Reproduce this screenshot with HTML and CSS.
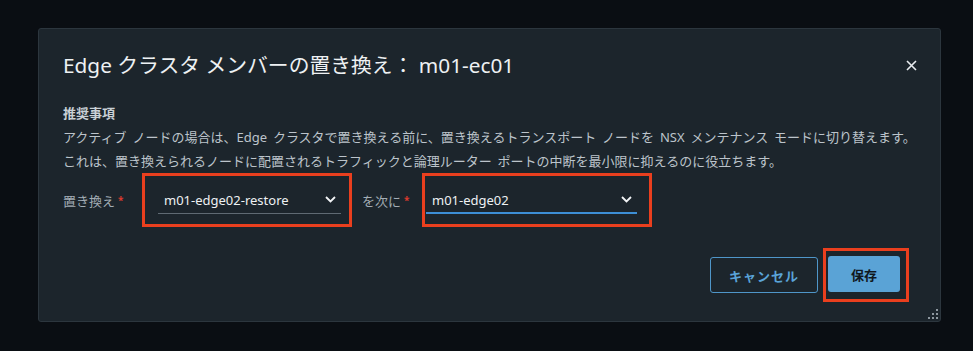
FILE: index.html
```html
<!DOCTYPE html>
<html lang="ja">
<head>
    <meta charset="UTF-8">
    <meta name="viewport" content="width=device-width, initial-scale=1.0">
    <title>Edge クラスタ メンバーの置き換え</title>
    <link rel="stylesheet" href="styles.css">
</head>
<body>

    <div class="modal">
        <div class="modal-header">
            <h1 class="modal-title">Edge クラスタ メンバーの置き換え： m01-ec01</h1>
            <button class="close" aria-label="閉じる">
                <svg width="11" height="11" viewBox="0 0 11 11">
                    <path d="M1 1 L10 10 M10 1 L1 10" stroke="#e8ecef" stroke-width="1.6" fill="none"/>
                </svg>
            </button>
        </div>

        <div class="modal-body">
            <h2 class="note-title">推奨事項</h2>
            <p class="note">アクティブ ノードの場合は、Edge クラスタで置き換える前に、置き換えるトランスポート ノードを NSX メンテナンス モードに切り替えます。</p>
            <p class="note">これは、置き換えられるノードに配置されるトラフィックと論理ルーター ポートの中断を最小限に抑えるのに役立ちます。</p>

            <div class="form-row">
                <label class="label label-first">置き換え<span class="req">*</span></label>
                <div class="mark mark-first">
                    <div class="select select-first">
                        <span>m01-edge02-restore</span>
                        <svg class="chevron" width="11" height="7" viewBox="0 0 11 7">
                            <path d="M1 1 L5.5 5.5 L10 1" stroke="#f2f4f6" stroke-width="1.8" fill="none"/>
                        </svg>
                    </div>
                </div>
                <label class="label label-second">を次に<span class="req">*</span></label>
                <div class="mark mark-second">
                    <div class="select select-second active">
                        <span>m01-edge02</span>
                        <svg class="chevron" width="11" height="7" viewBox="0 0 11 7">
                            <path d="M1 1 L5.5 5.5 L10 1" stroke="#f2f4f6" stroke-width="1.8" fill="none"/>
                        </svg>
                    </div>
                </div>
            </div>
        </div>

        <div class="modal-footer">
            <button class="btn btn-outline">キャンセル</button>
            <div class="mark mark-btn">
                <button class="btn btn-primary">保存</button>
            </div>
        </div>

        <svg class="grip" width="11" height="11" viewBox="0 0 11 11">
            <rect x="8" y="0" width="2" height="2" fill="#8d979f"/>
            <rect x="4" y="4" width="2" height="2" fill="#8d979f"/>
            <rect x="8" y="4" width="2" height="2" fill="#8d979f"/>
            <rect x="0" y="8" width="2" height="2" fill="#8d979f"/>
            <rect x="4" y="8" width="2" height="2" fill="#8d979f"/>
            <rect x="8" y="8" width="2" height="2" fill="#8d979f"/>
        </svg>
    </div>

</body>
</html>
```

FILE: styles.css
```css
/* Okno dialogowe */
body {
    margin: 0;
    background-color: #0a0e13;
    font-family: "Noto Sans", "Noto Sans CJK JP", sans-serif;
    color: #c3cad1;
}

.modal {
    position: relative;
    box-sizing: border-box;
    width: 903px;
    height: 294px;
    margin: 28px 0 0 38px;
    background-color: #1c252c;
    border: 1px solid #2c363e;
    border-radius: 3px;
    padding: 24px 23px 0 24px;
}

.modal-header {
    display: flex;
    justify-content: space-between;
    align-items: center;
    height: 24px;
}

.modal-title {
    margin: 0;
    font-size: 20.8px;
    font-weight: 400;
    line-height: 24px;
    color: #eef1f3;
}

.close {
    background: none;
    border: none;
    padding: 0;
    width: 11px;
    height: 11px;
    display: flex;
}

.modal-body {
    margin-top: 24px;
}

.note-title {
    margin: 0;
    font-size: 13px;
    font-weight: 700;
    line-height: 24px;
    color: #c9d0d6;
}

.note {
    margin: 0;
    font-size: 13px;
    line-height: 24px;
    word-spacing: 2.5px;
    color: #bcc4cb;
}

.form-row {
    display: flex;
    align-items: center;
    height: 54px;
}

.label {
    font-size: 13px;
    color: #a3adb5;
    display: flex;
    align-items: center;
}

.label-first {
    width: 79px;
}

.label-second {
    width: 60px;
    margin-left: 10px;
}

.req {
    color: #d93a2e;
    font-size: 10px;
    font-weight: 700;
    margin-left: 3px;
}

.mark {
    box-sizing: border-box;
    border: 3px solid #ea3f1e;
    display: flex;
}

.mark-first,
.mark-second {
    height: 54px;
    padding-top: 11px;
}

.mark-first {
    width: 210px;
    padding-left: 13px;
}

.mark-second {
    width: 230px;
    padding-left: 1px;
}

.select {
    box-sizing: border-box;
    height: 27px;
    display: flex;
    justify-content: space-between;
    align-items: center;
    padding: 0 5px 1px 6px;
    border-bottom: 1px solid #5f6a73;
    font-size: 13px;
    color: #eef1f3;
}

.select-first {
    width: 183px;
}

.select-second {
    width: 211px;
}

.select.active {
    border-bottom: 2px solid #3d8fd6;
    padding-top: 1px;
}

.modal-footer {
    display: flex;
    justify-content: flex-end;
    align-items: center;
    margin-top: 21px;
    padding-right: 8px;
}

.mark-btn {
    padding: 5px 6px 7px 2px;
    margin-left: 5px;
}

.btn {
    box-sizing: border-box;
    height: 36px;
    border-radius: 3px;
    font-family: "Noto Sans", "Noto Sans CJK JP", sans-serif;
    font-size: 13px;
    font-weight: 700;
    cursor: pointer;
}

.btn-outline {
    width: 108px;
    background: transparent;
    border: 1px solid #4f96c9;
    color: #5aa3d8;
    letter-spacing: 1px;
}

.btn-primary {
    width: 72px;
    background-color: #5aa3d6;
    border: none;
    color: #10181e;
}

.grip {
    position: absolute;
    right: 1px;
    bottom: 1px;
}
```
